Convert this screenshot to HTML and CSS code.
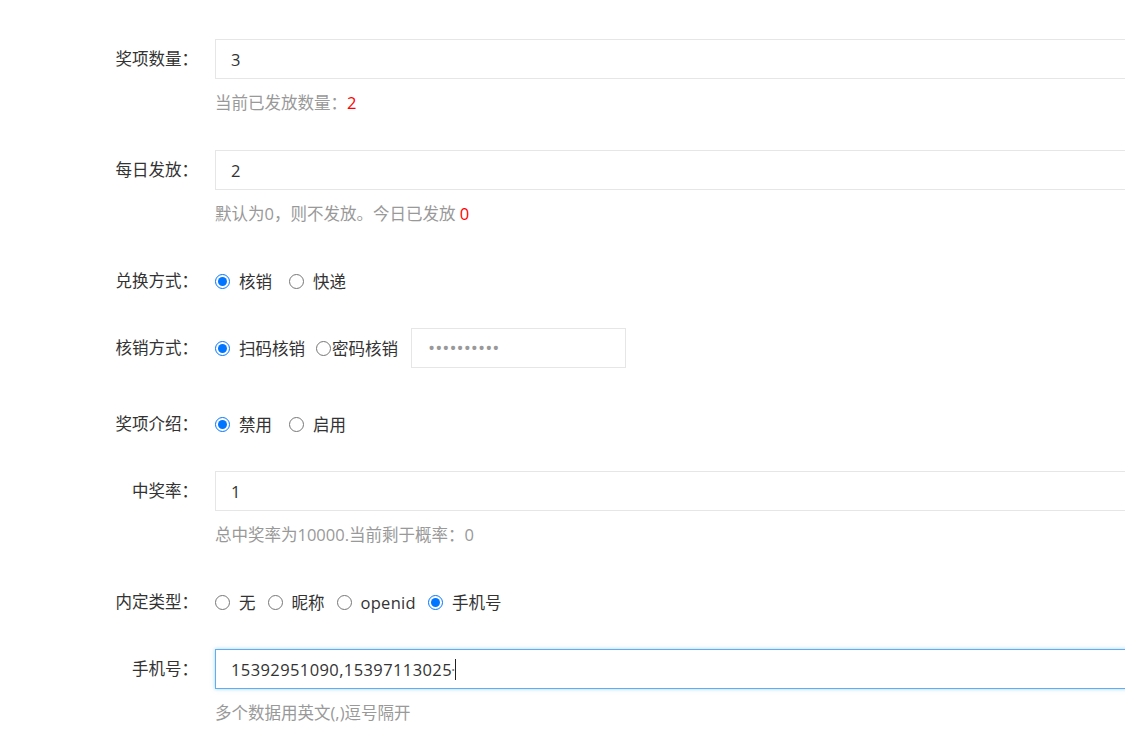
FILE: index.html
```html
<!DOCTYPE html>
<html lang="zh-CN">
<head>
<meta charset="utf-8">
<title>奖项设置</title>
<link rel="stylesheet" href="styles.css">
</head>
<body>
<form class="form">
  <div class="item">
    <label class="label">奖项数量：</label>
    <div class="block">
      <input class="input" type="text" value="3">
      <div class="aux">当前已发放数量：<span class="red">2</span></div>
    </div>
  </div>

  <div class="item">
    <label class="label">每日发放：</label>
    <div class="block">
      <input class="input" type="text" value="2">
      <div class="aux">默认为0，则不发放。今日已发放 <span class="red">0</span></div>
    </div>
  </div>

  <div class="item">
    <label class="label">兑换方式：</label>
    <div class="block radios">
      <label class="opt"><input type="radio" name="dh" checked><span>核销</span></label>
      <label class="opt"><input type="radio" name="dh"><span>快递</span></label>
    </div>
  </div>

  <div class="item item-tall">
    <label class="label">核销方式：</label>
    <div class="block radios">
      <label class="opt opt-scan"><input type="radio" name="hx" checked><span>扫码核销</span></label>
      <label class="opt opt-tight"><input type="radio" name="hx"><span>密码核销</span></label>
      <input class="input pwd" type="password" value="1234567890">
    </div>
  </div>

  <div class="item">
    <label class="label">奖项介绍：</label>
    <div class="block radios">
      <label class="opt"><input type="radio" name="js" checked><span>禁用</span></label>
      <label class="opt"><input type="radio" name="js"><span>启用</span></label>
    </div>
  </div>

  <div class="item">
    <label class="label">中奖率：</label>
    <div class="block">
      <input class="input" type="text" value="1">
      <div class="aux">总中奖率为10000.当前剩于概率：0</div>
    </div>
  </div>

  <div class="item">
    <label class="label">内定类型：</label>
    <div class="block radios">
      <label class="opt opt-compact"><input type="radio" name="nd"><span>无</span></label>
      <label class="opt opt-compact"><input type="radio" name="nd"><span>昵称</span></label>
      <label class="opt opt-compact"><input type="radio" name="nd"><span class="latin">openid</span></label>
      <label class="opt opt-compact"><input type="radio" name="nd" checked><span>手机号</span></label>
    </div>
  </div>

  <div class="item">
    <label class="label">手机号：</label>
    <div class="block">
      <div class="input focused"><span class="value">15392951090,15397113025</span><span class="ime">·</span><span class="caret"></span></div>
      <div class="aux">多个数据用英文(,)逗号隔开</div>
    </div>
  </div>
</form>
</body>
</html>
```

FILE: styles.css
```css
html, body {
  margin: 0;
  padding: 0;
  overflow: hidden;
  background: #fff;
}

body {
  font-family: "Open Sans", "Noto Sans CJK SC", sans-serif;
  font-size: 16.5px;
  color: #333;
}

.form {
  width: calc(100% + 40px);
  padding-top: 39px;
}

.item {
  display: grid;
  grid-template-columns: 198px 1fr;
  column-gap: 17px;
  margin-bottom: 27px;
}

.item-tall {
  margin-bottom: 36px;
}

.label {
  text-align: right;
  line-height: 40px;
  height: 40px;
  color: #333;
  white-space: nowrap;
}

.block {
  min-width: 0;
}

.input {
  display: block;
  box-sizing: border-box;
  width: 100%;
  height: 40px;
  margin: 0;
  padding: 0 14px 0 15px;
  border: 1px solid #e6e6e6;
  border-radius: 0;
  background: #fff;
  font: inherit;
  color: #333;
  outline: none;
  letter-spacing: 0.4px;
}

.focused {
  display: flex;
  align-items: center;
  border-color: #5eaef0;
  box-shadow: 0 0 4px rgba(94, 174, 240, 0.55);
}

.ime {
  color: #777;
  letter-spacing: 0;
  margin-left: -1px;
}

.caret {
  display: inline-block;
  width: 1px;
  height: 21px;
  background: #222;
}

.aux {
  margin-top: 12px;
  margin-bottom: 8px;
  line-height: 24px;
  color: #999;
  white-space: nowrap;
}

.red {
  color: #ff0000;
}

.radios {
  display: flex;
  align-items: center;
  height: 40px;
}

.opt {
  display: inline-flex;
  align-items: center;
  margin-right: 17px;
  white-space: nowrap;
}

.opt input {
  width: 15px;
  height: 15px;
  margin: 0 9px 0 0;
  flex: none;
}

.opt-scan {
  margin-right: 11px;
}

.opt-tight {
  margin-right: 13px;
}

.opt-tight input {
  margin-right: 1px;
}

.opt-compact {
  margin-right: 12px;
}

.latin {
  letter-spacing: 0.3px;
}

.pwd {
  width: 215px;
  flex: none;
  padding-left: 16px;
  color: #999;
  font-size: 19px;
  letter-spacing: 0;
}
```
